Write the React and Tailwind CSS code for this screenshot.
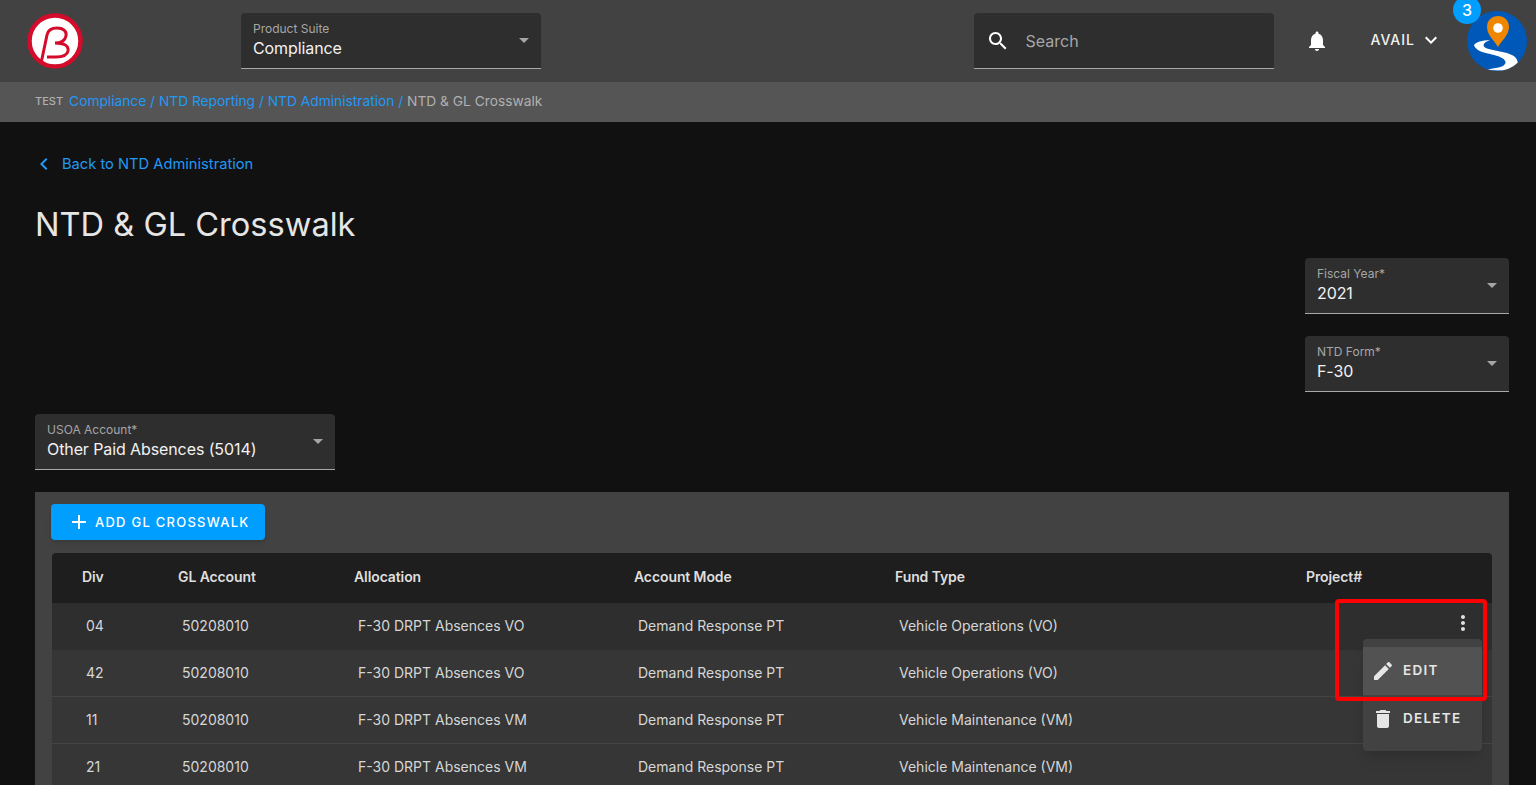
import React from "react";

const rows = [
  { div: "04", allocation: "F-30 DRPT Absences VO", fund: "Vehicle Operations (VO)" },
  { div: "42", allocation: "F-30 DRPT Absences VO", fund: "Vehicle Operations (VO)" },
  { div: "11", allocation: "F-30 DRPT Absences VM", fund: "Vehicle Maintenance (VM)" },
  { div: "21", allocation: "F-30 DRPT Absences VM", fund: "Vehicle Maintenance (VM)" },
];

const gridCols = "grid grid-cols-[96px_176px_280px_261px_411px_1fr]";

function Icon({ d, className }) {
  return (
    <svg viewBox="0 0 24 24" fill="currentColor" className={className}>
      <path d={d} />
    </svg>
  );
}

function SelectBox({ label, value, className }) {
  return (
    <div className={"relative h-14 shrink-0 rounded-t bg-[#2e2e2e] border-b border-[#a8a8a8] pl-3 pt-[8px] " + className}>
      <div className="text-xs leading-4 text-[#a6a6a6]">{label}</div>
      <div className="-mt-px text-base leading-6 tracking-[-0.1px] text-[#f2f2f2]">{value}</div>
      <div className="absolute right-[12px] top-[25px] w-0 h-0 border-x-[5px] border-x-transparent border-t-[5px] border-t-[#a6a6a6]" />
    </div>
  );
}

function Logo() {
  return (
    <svg viewBox="0 0 58 58" className="w-[58px] h-[58px]">
      <circle cx="29" cy="29" r="25.500" fill="#fff" stroke="#d40b2a" strokeWidth="4.500" />
      <path
        d="M15.500 49 L21 23 C22 18 26 16 31 16 C37 16 41 19 40 24 C39 29 35 31 29 31 C37 31 43 33 42 39 C41 44 36 45 30 45 L21 45"
        fill="none"
        stroke="#d40b2a"
        strokeWidth="3"
      />
    </svg>
  );
}

function Avatar() {
  return (
    <svg viewBox="0 0 60 60" className="w-[60px] h-[60px]">
      <defs>
        <clipPath id="avatarClip">
          <circle cx="30" cy="30" r="30" />
        </clipPath>
      </defs>
      <g clipPath="url(#avatarClip)">
        <rect width="60" height="60" fill="#0058b8" />
        <path
          d="M23 29 C15 29.500 9 31 7 34 C8 38 13 40.500 17 41.500 C24 43.500 31 44.500 35 47 C40 50 39 53 36 55 C32 57 26 57 20 59 L48 60 C52 55 52 48 46 44.500 C39 40.500 27 40 20 37.500 C15 35.500 15 32 23 29 Z"
          fill="#fff"
        />
      </g>
      <path
        d="M31 36 C27 29 20 24 20 16 C20 9 25 5 31 5 C37 5 42 9 42 16 C42 24 35 29 31 36 Z"
        fill="#ef8600"
      />
      <circle cx="31" cy="17" r="4.800" fill="#fff" />
    </svg>
  );
}

function Header() {
  return (
    <div className="relative h-[82px] bg-[#424242] flex items-center">
      <div className="ml-[26px] w-[215px] shrink-0 -mt-px">
        <Logo />
      </div>
      <SelectBox label="Product Suite" value="Compliance" className="w-[300px]" />
      <div className="flex-1" />
      <div className="w-[300px] h-14 rounded-t bg-[#2e2e2e] border-b border-[#a8a8a8] flex items-center pl-3">
        <Icon
          d="M15.500 14h-.79l-.28-.27C15.410 12.590 16 11.110 16 9.500 16 5.910 13.090 3 9.500 3S3 5.910 3 9.500 5.910 16 9.500 16c1.610 0 3.090-.59 4.230-1.570l.27.28v.79l5 4.990L20.490 19l-4.990-5zm-6 0C7.010 14 5 11.990 5 9.500S7.010 5 9.500 5 14 7.010 14 9.500 11.990 14 9.500 14z"
          className="w-6 h-6 text-white"
        />
        <span className="ml-[16px] text-base text-[#a6a6a6]">Search</span>
      </div>
      <Icon
        d="M12 22c1.100 0 2-.9 2-2h-4c0 1.100.89 2 2 2zm6-6v-5c0-3.070-1.640-5.640-4.500-6.320V4c0-.83-.67-1.500-1.500-1.500s-1.500.67-1.500 1.500v.68C7.630 5.360 6 7.920 6 11v5l-2 2v1h16v-1l-2-2z"
        className="w-6 h-6 text-white ml-[31px]"
      />
      <span className="ml-[42px] text-sm font-medium tracking-[1px] text-[#f2f2f2] -mt-[3px]">AVAIL</span>
      <Icon
        d="M16.590 8.590 12 13.170 7.410 8.590 6 10l6 6 6-6z"
        className="w-6 h-6 text-white ml-[4px] -mt-[2px]"
      />
      <div className="relative ml-[24px] mr-[9px] -mt-[1px]">
        <Avatar />
      </div>
      <div className="absolute left-[1453px] -top-[4px] w-7 h-7 rounded-full bg-[#009eff] text-white text-base font-medium flex items-center justify-center">
        3
      </div>
    </div>
  );
}

function Breadcrumb() {
  return (
    <div className="h-10 pb-px bg-[#555555] flex items-center pl-[35px] text-[13.75px] text-[#2199f5]">
      <span className="text-[11px] font-medium text-[#b0b0b0] mr-[6px]">TEST</span>
      <span>Compliance / NTD Reporting / NTD Administration /&nbsp;</span>
      <span className="text-[#b0b0b0]">NTD &amp; GL Crosswalk</span>
    </div>
  );
}

function CrosswalkTable() {
  return (
    <div className="relative bg-[#424242] mt-[22px] h-[400px] px-4 pt-3">
      <button className="w-[214px] h-9 rounded bg-[#009eff] shadow-md flex items-center pl-[16px] text-[13px] font-medium tracking-[1.25px] text-white">
        <Icon d="M19 13h-6v6h-2v-6H5v-2h6V5h2v6h6v2z" className="w-6 h-6 mr-1" />
        <span className="mt-px">ADD GL CROSSWALK</span>
      </button>
      <div className="relative mt-[13px] ml-px mr-px rounded-t">
        <div className={gridCols + " h-[50px] items-center bg-[#1e1e1e] pl-[30px] pb-[2px] text-sm font-semibold tracking-[-0.1px] text-[#dedede] rounded-t"}>
          <div>Div</div>
          <div>GL Account</div>
          <div>Allocation</div>
          <div>Account Mode</div>
          <div>Fund Type</div>
          <div>Project#</div>
        </div>
        {rows.map((row, i) => (
          <div
            key={row.div}
            className={
              gridCols +
              " h-[47px] items-center pl-[34px] text-sm text-[#d6d6d6] " +
              (i === 0 ? "pb-[2px] bg-[#2e2e2e]" : "pb-px bg-[#363636] border-b border-[#454545]")
            }
          >
            <div>{row.div}</div>
            <div>50208010</div>
            <div>{row.allocation}</div>
            <div>Demand Response PT</div>
            <div>{row.fund}</div>
            <div />
          </div>
        ))}
        <Icon
          d="M12 8c1.100 0 2-.9 2-2s-.9-2-2-2-2 .9-2 2 .9 2 2 2zm0 2c-1.100 0-2 .9-2 2s.9 2 2 2 2-.9 2-2-.9-2-2-2zm0 6c-1.100 0-2 .9-2 2s.9 2 2 2 2-.9 2-2-.9-2-2-2z"
          className="absolute left-[1399px] top-[58px] w-6 h-6 text-[#e0e0e0]"
        />
        <div className="absolute left-[1311px] top-[86px] w-[119px] h-[112px] rounded bg-[#424242] shadow-lg py-2">
          <div className="h-12 pb-px bg-[#525252] flex items-center pl-2 text-[13.5px] font-semibold tracking-[1.25px] text-[#e6e6e6]">
            <Icon
              d="M3 17.250V21h3.750L17.810 9.940l-3.750-3.750L3 17.250zM20.710 7.040c.39-.39.39-1.020 0-1.410l-2.340-2.340c-.39-.39-1.020-.39-1.410 0l-1.830 1.830 3.750 3.750 1.830-1.830z"
              className="w-6 h-6 mr-2"
            />
            EDIT
          </div>
          <div className="h-12 pb-px flex items-center pl-2 text-[13.5px] font-semibold tracking-[1.25px] text-[#e6e6e6]">
            <Icon
              d="M6 19c0 1.100.9 2 2 2h8c1.100 0 2-.9 2-2V7H6v12zM19 4h-3.500l-1-1h-5l-1 1H5v2h14V4z"
              className="w-6 h-6 mr-2"
            />
            DELETE
          </div>
        </div>
        <div className="absolute left-[1283px] top-[46px] w-[152px] h-[102px] border-4 border-[#ff0000] rounded-sm" />
      </div>
    </div>
  );
}

export default function App() {
  return (
    <div className="h-screen overflow-hidden bg-[#111111] [font-family:Inter,sans-serif]">
      <Header />
      <Breadcrumb />
      <div className="pr-[27px] pl-[35px]">
        <div className="flex items-center mt-[30px] h-6 text-[#2199f5] text-[14.7px]">
          <Icon d="M15.410 7.410 14 6l-6 6 6 6 1.410-1.410L10.830 12z" className="w-6 h-6 -ml-[3px] mr-[6px]" />
          Back to NTD Administration
        </div>
        <h1 className="mt-[28px] text-[32.6px] leading-10 text-[#e6e6e6]">NTD &amp; GL Crosswalk</h1>
        <div className="flex flex-col items-end mt-[14px] gap-[22px]">
          <SelectBox label="Fiscal Year*" value="2021" className="w-[204px]" />
          <SelectBox label="NTD Form*" value="F-30" className="w-[204px]" />
        </div>
        <SelectBox label="USOA Account*" value="Other Paid Absences (5014)" className="w-[300px] mt-[22px]" />
        <CrosswalkTable />
      </div>
    </div>
  );
}
